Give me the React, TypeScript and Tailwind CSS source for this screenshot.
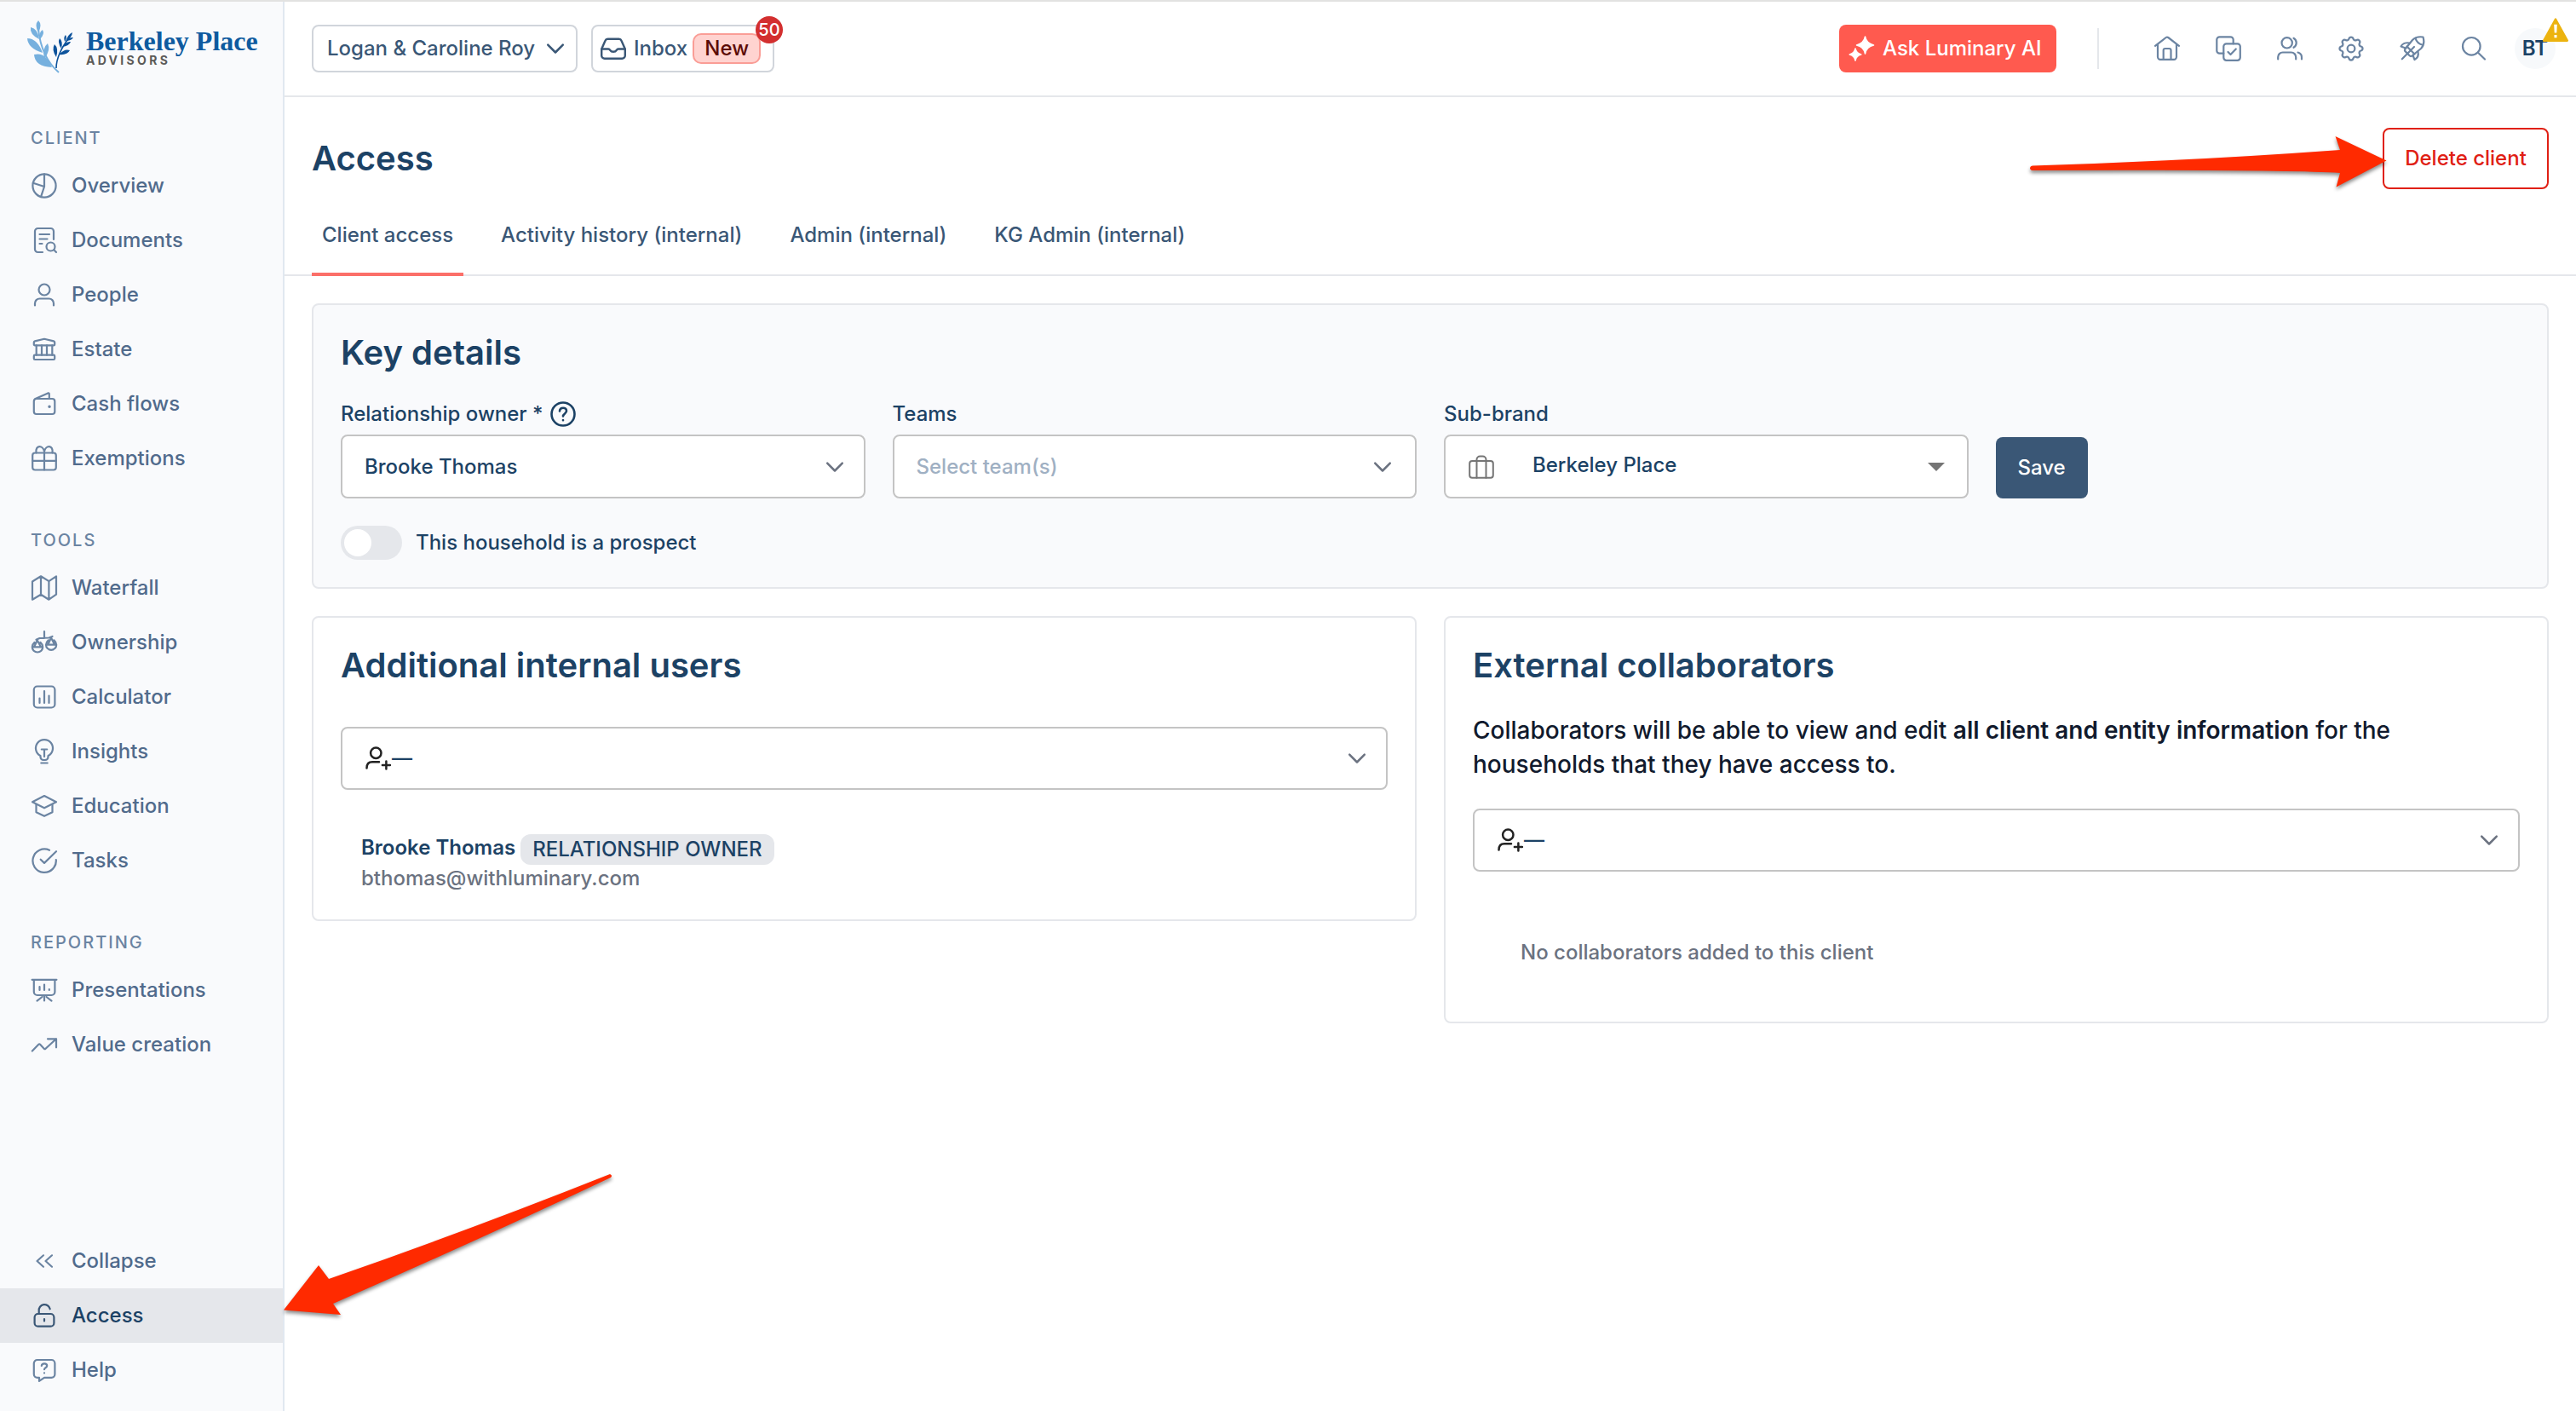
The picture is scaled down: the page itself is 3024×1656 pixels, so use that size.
import type { ReactNode } from 'react';

type IconProps = { children: ReactNode; className?: string; stroke?: number };

function Icon({ children, className = '', stroke = 2.2 }: IconProps) {
  return (
    <svg
      viewBox="0 0 32 32"
      className={`w-8 h-8 shrink-0 ${className}`}
      fill="none"
      stroke="currentColor"
      strokeWidth={stroke}
      strokeLinecap="round"
      strokeLinejoin="round"
    >
      {children}
    </svg>
  );
}

const icons = {
  overview: (
    <>
      <circle cx="16" cy="16" r="13.6" />
      <path d="M16 2.4V17l-4 12.2M2.8 12.8 16 17" />
    </>
  ),
  documents: (
    <>
      <path d="M14 30H8.5A3.5 3.5 0 0 1 5 26.5v-21A3.5 3.5 0 0 1 8.5 2h15A3.5 3.5 0 0 1 27 5.5V15" />
      <path d="M10.5 9H22M10.5 14.5h9M10.5 20h3" />
      <circle cx="23.5" cy="23.5" r="5" />
      <path d="M27.3 27.3 30 30" />
    </>
  ),
  people: (
    <>
      <circle cx="16" cy="10" r="6.5" />
      <path d="M5 28.5V26a5.5 5.5 0 0 1 5.5-5.5h11A5.5 5.5 0 0 1 27 26v2.5" />
    </>
  ),
  estate: (
    <>
      <path d="M3.8 7.8c0-.7.5-1.200 1.200-1.400L16 3.800l11 2.600c.7.2 1.200.7 1.200 1.400v2.400c0 .7-.5 1.200-1.200 1.200H5c-.7 0-1.200-.5-1.200-1.200z" />
      <path d="M6.7 11.4v11.300M13 11.400v11.300M19 11.400v11.300M25.300 11.400v11.300" />
      <rect x="3.8" y="22.7" width="24.4" height="5.3" rx="1.2" />
    </>
  ),
  cash: (
    <>
      <rect x="3.8" y="10" width="24.5" height="18" rx="3" />
      <path d="M5.5 10 20.3 3.400c.8-.3 1.500.1 1.500 1V10" />
      <circle cx="22" cy="19.3" r="1" fill="currentColor" strokeWidth="1.5" />
    </>
  ),
  gift: (
    <>
      <rect x="2.2" y="9.5" width="27.6" height="20" rx="3" />
      <path d="M16 9.5v20M2.200 18.800h27.600M6.500 9.500C5 0 14.500 0 16 8 17.500 0 27 0 25.500 9.500" />
    </>
  ),
  waterfall: (
    <path d="M2 8.500 12 2.300l9.400 5.800L30 2.400v21.300l-8.600 6L12 23.700l-10 6zM12 2.300v21.400M21.400 8.100v21.600" />
  ),
  ownership: (
    <>
      <path d="M16 3v8M6.500 12.800l4-1.800 11-.5 4-1.500" />
      <path d="M7.800 13.500 4 21.300h8zM1.800 21.300h12.400a6.200 6.200 0 0 1-12.400 0c0-2.300 1.200-4 2.800-5.400M14.200 21.300c0-2.300-1.200-4-2.800-5.400" />
      <path d="m24 10.500-3.800 8.200h8zM18 18.700h12.200a6.100 6.100 0 0 1-12.200 0c0-2.300 1.200-4 2.800-5.400M30.200 18.700c0-2.300-1.200-4-2.800-5.400" />
    </>
  ),
  calculator: (
    <>
      <rect x="3.8" y="3.5" width="24.6" height="25" rx="4" />
      <path d="M10.500 17.500V23M16 9v14M21.500 14.500V23" />
    </>
  ),
  insights: (
    <>
      <path d="M11.500 21A10 10 0 1 1 20.500 21v1.500A3.500 3.500 0 0 1 17 26h-2a3.500 3.500 0 0 1-3.500-3.500z" />
      <path d="M12.800 13.500h6.400M16 13.500V22M12.300 29.500h7.400" />
    </>
  ),
  education: (
    <>
      <path d="M2 11.300 16 4l14 7.300-14 7z" />
      <path d="M6.500 14v9.300l9.500 4.500 9.500-4.500V14" />
    </>
  ),
  tasks: (
    <>
      <path d="M22 3.800A13.700 13.700 0 1 0 29.800 15" />
      <path d="m11.700 14.700 4.300 4.200L30 5.200" />
    </>
  ),
  presentations: (
    <>
      <path d="M1.600 3.800h28.800M3.800 3.800V18a4 4 0 0 0 4 4h16.600a4 4 0 0 0 4-4V3.800" />
      <path d="M10.500 12v4M16 9.500V16M21.800 15v1M16 22v6.500M13.500 24l-6 4.600M18.500 24l6 4.600" />
    </>
  ),
  value: <path d="m1.800 23.500 7.500-7.700c.5-.5 1.300-.5 1.800 0l4.600 4.900c.5.5 1.300.5 1.800 0L30 9.300M20 9.300h10v10" />,
  collapse: <path d="M15 9.300 7.500 16l7.500 6.700M25 9.300 17.500 16l7.500 6.700" />,
  lock: (
    <>
      <rect x="4.6" y="14" width="22.8" height="14.7" rx="4" />
      <path d="M9.700 14v-3.500a6.600 6.600 0 0 1 13-2.200M16 20v2.500" />
    </>
  ),
  help: (
    <>
      <path d="M7.800 4h16.600a4 4 0 0 1 4 4v12.800a4 4 0 0 1-4 4H16l-6 4v-4H7.800a4 4 0 0 1-4-4V8a4 4 0 0 1 4-4z" />
      <path d="M12.800 11c.3-3.500 6.400-3.500 6.400 0 0 2.200-3.200 2.300-3.200 4.200M16 19.300v.1" />
    </>
  ),
};

const navGroups = [
  {
    title: 'CLIENT',
    items: [
      { name: 'Overview', icon: icons.overview },
      { name: 'Documents', icon: icons.documents },
      { name: 'People', icon: icons.people },
      { name: 'Estate', icon: icons.estate },
      { name: 'Cash flows', icon: icons.cash },
      { name: 'Exemptions', icon: icons.gift },
    ],
  },
  {
    title: 'TOOLS',
    items: [
      { name: 'Waterfall', icon: icons.waterfall },
      { name: 'Ownership', icon: icons.ownership },
      { name: 'Calculator', icon: icons.calculator },
      { name: 'Insights', icon: icons.insights },
      { name: 'Education', icon: icons.education },
      { name: 'Tasks', icon: icons.tasks },
    ],
  },
  {
    title: 'REPORTING',
    items: [
      { name: 'Presentations', icon: icons.presentations },
      { name: 'Value creation', icon: icons.value },
    ],
  },
];

const footerItems = [
  { name: 'Collapse', icon: icons.collapse },
  { name: 'Access', icon: icons.lock, active: true },
  { name: 'Help', icon: icons.help },
];

const tabs = ['Client access', 'Activity history (internal)', 'Admin (internal)', 'KG Admin (internal)'];

function NavItem({ name, icon, active }: { name: string; icon: ReactNode; active?: boolean }) {
  return (
    <a
      className={`flex h-16 items-center pl-9 ${active ? 'bg-[#e5e7eb] text-[#1c4265]' : 'text-[#516b8c]'}`}
    >
      <Icon className={active ? 'text-[#3a5776]' : 'text-[#6b84a2]'}>{icon}</Icon>
      <span className="ml-4">{name}</span>
    </a>
  );
}

// Almond shaped leaf: base x, base y, tip x, tip y, width
type LeafShape = [number, number, number, number, number];

function Leaf({ d }: { d: LeafShape }) {
  const [bx, by, tx, ty, w] = d;
  const len = Math.hypot(tx - bx, ty - by);
  const nx = (-(ty - by) / len) * w;
  const ny = ((tx - bx) / len) * w;
  const mx = bx + (tx - bx) * 0.65;
  const my = by + (ty - by) * 0.65;
  return <path d={`M${bx} ${by}Q${mx + nx} ${my + ny} ${tx} ${ty}Q${mx - nx} ${my - ny} ${bx} ${by}Z`} />;
}

const lightLeaves: LeafShape[] = [
  [13, 14, 13, 0, 5],
  [14, 22, 4, 8, 6],
  [15, 22, 18, 11, 4],
  [18, 38, 0, 21, 8],
  [20, 45, 24, 27, 5.5],
  [29, 55, 8, 40, 11],
];

const darkLeaves: LeafShape[] = [
  [34, 43, 32, 28, 4.5],
  [37, 40, 50, 35, 4.5],
  [40, 33, 38, 21, 3.5],
  [41, 31, 51, 25, 3.5],
  [44, 25, 45, 17, 2.5],
  [45, 25, 53, 14, 3],
  [46, 24, 54, 20, 2.5],
];

function Logo() {
  return (
    <div className="flex h-24 pl-8 pt-[22px]">
      <svg viewBox="0 0 56 62" className="w-[56px] h-[62px] shrink-0">
        <g fill="#76b0de">
          {lightLeaves.map((d, i) => <Leaf key={i} d={d} />)}
        </g>
        <path d="M13 10C15 30 22 48 37 61" fill="none" stroke="#76b0de" strokeWidth="2" />
        <g fill="#0c529b">
          {darkLeaves.map((d, i) => <Leaf key={i} d={d} />)}
        </g>
        <path d="M34 56C34 44 40 32 50 19" fill="none" stroke="#0c529b" strokeWidth="1.6" />
      </svg>
      <div className="ml-[13px] mt-2 flex flex-col whitespace-nowrap">
        <span className="font-['Liberation_Serif',serif] text-[32px] leading-8 font-bold text-[#0e5a9f]">
          Berkeley Place
        </span>
        <span className="text-sm leading-[14px] font-bold tracking-[3.3px] text-[#5b5a58]">ADVISORS</span>
      </div>
    </div>
  );
}

function Sidebar() {
  return (
    <aside className="flex w-[334px] shrink-0 flex-col border-r-2 border-[#e1e8f0] bg-[#f9fafc] pb-4">
      <Logo />
      {navGroups.map((group) => (
        <nav key={group.title}>
          <div className="flex h-[88px] items-end pb-2 pl-9 text-xl leading-8 tracking-[2px] text-[#6b84a2]">
            {group.title}
          </div>
          {group.items.map((item) => <NavItem key={item.name} {...item} />)}
        </nav>
      ))}
      <nav className="mt-auto">
        {footerItems.map((item) => <NavItem key={item.name} {...item} />)}
      </nav>
    </aside>
  );
}

function Chevron({ className = '' }: { className?: string }) {
  return (
    <Icon className={className} stroke={2.5}>
      <path d="m7.200 11.700 8.800 8.800 8.800-8.800" />
    </Icon>
  );
}

function Header() {
  return (
    <header className="flex h-28 items-center border-b-2 border-[#e5e7eb] pl-8 pr-6 text-[#3a5776]">
      <button className="flex h-14 w-[312px] items-center justify-between rounded-lg border-2 border-[#d1d5db] pl-4 pr-2">
        Logan &amp; Caroline Roy
        <Chevron />
      </button>
      <button className="relative ml-4 flex h-14 w-[215px] items-center rounded-lg border-2 border-[#d1d5db] pl-2">
        <Icon stroke={2.4}>
          <path d="M2.200 16.500 6.500 6.800C7 5.500 8 4.800 9.400 4.800h13.200c1.400 0 2.400.7 2.900 2l4.300 9.700v7.700a3.500 3.500 0 0 1-3.500 3.500H5.700a3.500 3.500 0 0 1-3.500-3.500z" />
          <path d="M2.500 16.500h7.700c1 0 1.500.5 2 1.300.8 1.300 2 2 3.800 2s3-.7 3.800-2c.5-.8 1-1.300 2-1.300h7.700" />
        </Icon>
        <span className="ml-2">Inbox</span>
        <span className="ml-1.5 flex h-9 w-20 items-center justify-center rounded-[10px] border-2 border-[#fa9d96] bg-[#ffd3d0] text-[#5c0b06]">
          New
        </span>
        <span className="absolute -right-3 -top-3 flex size-8 items-center justify-center rounded-full bg-[#d32f2f] text-xl text-white">
          50
        </span>
      </button>
      <button className="ml-auto flex h-14 w-[255px] items-center rounded-lg bg-[#ff5a4f] pl-[11px] text-white">
        <svg
          viewBox="0 0 32 32"
          className="h-8 w-8 shrink-0"
          fill="currentColor"
          stroke="currentColor"
          strokeWidth="1.5"
          strokeLinejoin="round"
        >
          <path d="M19.500 2c1 5.500 3.500 8.500 10 10-6.500 1.500-9 4.500-10 10-1-5.500-3.500-8.500-10-10 6.500-1.500 9-4.500 10-10z" />
          <path d="M8 16c.8 4 2.600 6 6.800 7-4.200 1-6 3-6.800 7-.8-4-2.600-6-6.800-7 4.200-1 6-3 6.800-7z" />
        </svg>
        <span className="ml-2">Ask Luminary AI</span>
      </button>
      <div className="ml-12 h-12 w-0.5 bg-[#e5e7eb]" />
      <div className="ml-16 flex items-center gap-10 text-[#6b84a2]">
        <Icon>
          <path d="M2 12.800 14.700 3c.8-.6 1.800-.6 2.600 0L30 12.800M5 10.800v15a3 3 0 0 0 3 3h16a3 3 0 0 0 3-3v-15" />
          <path d="M11.700 28.500V18a2 2 0 0 1 2-2h4.800a2 2 0 0 1 2 2v10.500" />
        </Icon>
        <Icon>
          <path d="M10.300 21.700H5.500a3.200 3.200 0 0 1-3.200-3.200v-13a3.200 3.200 0 0 1 3.200-3.200h13a3.200 3.200 0 0 1 3.200 3.200v4.800" />
          <rect x="10.3" y="10.3" width="19.5" height="19.5" rx="3.2" />
          <path d="m15.500 20 3 3 6.300-6.500" />
        </Icon>
        <Icon>
          <circle cx="12.7" cy="9.3" r="6.2" />
          <path d="M20.500 3.800a6.300 6.300 0 0 1 0 11M2.200 28.500V26a5.500 5.500 0 0 1 5.500-5.500h10A5.500 5.500 0 0 1 23.200 26v2.500M25.500 20.500a6 6 0 0 1 4.500 5.800v2.200" />
        </Icon>
        <Icon stroke={1.5}>
          <g transform="translate(-2 -2) scale(1.5)">
            <path d="M10.325 4.317c.426-1.756 2.924-1.756 3.350 0a1.724 1.724 0 0 0 2.573 1.066c1.543-.94 3.310.826 2.370 2.370a1.724 1.724 0 0 0 1.065 2.572c1.756.426 1.756 2.924 0 3.350a1.724 1.724 0 0 0-1.066 2.573c.94 1.543-.826 3.310-2.370 2.370a1.724 1.724 0 0 0-2.572 1.065c-.426 1.756-2.924 1.756-3.350 0a1.724 1.724 0 0 0-2.573-1.066c-1.543.94-3.310-.826-2.370-2.370a1.724 1.724 0 0 0-1.065-2.572c-1.756-.426-1.756-2.924 0-3.350a1.724 1.724 0 0 0 1.066-2.573c-.94-1.543.826-3.310 2.370-2.370 1 .608 2.296.07 2.572-1.065z" />
            <circle cx="12" cy="12" r="2.9" />
          </g>
        </Icon>
        <Icon>
          <path d="M28.500 2.500c-5-.8-9.500.4-12.500 3.500L7.500 16.500c-.8 1-.7 2 .2 2.900l4.900 4.900c.9.9 1.900 1 2.900.2L26 16c3-3 4-8.500 2.500-13.500z" />
          <path d="M19.500 3.800c1 3.800 4 6.800 8.500 8M18 14l-9.500 9.500M9.500 13.500 13 17M15 19l3.500 3.500M3.800 28.300 8.500 23.500" />
          <path d="M12.500 9.500C8 8.500 4 10.500 2.500 13.500L8 15.500M22.500 19.500c1 4.500-1 8-4 9.500l-2-5" />
        </Icon>
        <Icon>
          <circle cx="13.3" cy="13.3" r="10.3" />
          <path d="m21 20.800 8 7.700" />
        </Icon>
      </div>
      <div className="relative ml-8 flex size-12 items-center justify-center rounded-full bg-[#f7f9fb] font-semibold text-[#1c4265]">
        BT
        <svg viewBox="0 0 30 28" className="absolute -top-3 left-[33px] h-7 w-[30px]">
          <path d="M15 1.500 28.800 26.700H1.200z" fill="#ecb30f" stroke="#ecb30f" strokeWidth="2.4" strokeLinejoin="round" />
          <path d="M13.200 7.800h3.600l-.5 9.700h-2.600zM13.500 20h3v3.300h-3z" fill="#fff" />
        </svg>
      </div>
    </header>
  );
}

function Card({ title, className = '', children }: { title: string; className?: string; children: ReactNode }) {
  return (
    <section className={`rounded-lg border-2 border-[#e5e7eb] p-8 ${className}`}>
      <h2 className="text-[40px] leading-[48px] font-semibold">{title}</h2>
      {children}
    </section>
  );
}

function UserSelect({ className = '' }: { className?: string }) {
  return (
    <div className={`flex h-[74px] items-center rounded-lg border-2 border-[#c4c4c4] bg-white pl-[26px] pr-[18px] ${className}`}>
      <Icon className="text-[#222]" stroke={2.5}>
        <circle cx="13.3" cy="9.7" r="6.2" />
        <path d="M2.500 27.500c0-5 2-7.200 6.500-7.200h8M25.400 19.500v9M20.900 24h9" />
      </Icon>
      <span>—</span>
      <Chevron className="ml-auto text-[#6b7280]" />
    </div>
  );
}

const fieldBox = 'mt-2 flex h-[75px] items-center rounded-lg border-2 border-[#c4c4c4] bg-white pl-[26px]';

function KeyDetails() {
  return (
    <Card title="Key details" className="bg-[#f9fafc]">
      <div className="mt-8 grid grid-cols-4 items-end gap-8">
        <div>
          <label className="flex h-8 items-center">
            Relationship owner *
            <Icon className="ml-[7px]" stroke={2.6}>
              <circle cx="16" cy="16" r="13.5" />
              <path d="M12 12.500c.3-5 8-5 8-.2 0 3-4 3.200-4 6.200M16 23v.2" />
            </Icon>
          </label>
          <div className={`${fieldBox} pr-[18px]`}>
            Brooke Thomas
            <Chevron className="ml-auto text-[#6b7280]" />
          </div>
        </div>
        <div>
          <label className="flex h-8 items-center">Teams</label>
          <div className={`${fieldBox} pr-[22px] text-[#9fb0c3]`}>
            Select team(s)
            <Chevron className="ml-auto text-[#6b7280]" />
          </div>
        </div>
        <div>
          <label className="flex h-8 items-center">Sub-brand</label>
          <div className={`${fieldBox} pr-[18px]`}>
            <Icon className="text-[#757575]" stroke={2}>
              <rect x="2.2" y="9" width="27.6" height="19.7" rx="3" />
              <path d="M10.500 28.700V7.500a4 4 0 0 1 4-4h3a4 4 0 0 1 4 4v21.200" />
            </Icon>
            <span className="mb-[3px] ml-11">Berkeley Place</span>
            <svg viewBox="0 0 20 10" className="ml-auto mr-2 h-2.5 w-5 fill-[#757575]">
              <path d="M0 0h20L10 10z" />
            </svg>
          </div>
        </div>
        <button className="flex h-[72px] w-[108px] items-center justify-center rounded-lg bg-[#3a5776] text-white">
          Save
        </button>
      </div>
      <div className="mt-8 flex h-10 items-center">
        <span className="flex h-10 w-[72px] items-center rounded-full bg-[#e5e7eb] pl-1">
          <span className="size-8 rounded-full bg-white" />
        </span>
        <span className="ml-4">This household is a prospect</span>
      </div>
    </Card>
  );
}

function Arrows() {
  return (
    <svg
      viewBox="0 0 3024 1656"
      className="pointer-events-none absolute left-0 -top-0.5 h-[1656px] w-[3024px] fill-[#ff2a00] drop-shadow-[0_3px_2px_rgba(0,0,0,0.45)]"
    >
      <path d="M2386 194.500Q2570 189 2747 176L2741.500 160 2801.500 188.500 2742.500 219.500 2747 203Q2680 199 2386 200Q2383 199.500 2383 197Q2383.500 194.500 2386 194.500Z" />
      <path d="M716 1378Q719.500 1379.500 717 1382Q560 1456 391 1530L400 1543 333 1537.500 374 1485 386 1501Q550 1444 716 1378Z" />
    </svg>
  );
}

export default function App() {
  return (
    <div className="relative flex h-[1656px] w-full overflow-hidden border-t-2 border-[#e2e2e1] bg-white font-['Inter',sans-serif] text-2xl leading-8 font-medium text-[#1c4265]">
      <Sidebar />
      <div className="min-w-0 flex-1">
        <Header />
        <div className="flex items-center justify-between px-8 pt-9">
          <h1 className="text-[40px] leading-[48px] font-semibold">Access</h1>
          <button className="flex h-[72px] w-[195px] items-center justify-center rounded-lg border-2 border-[#e02014] text-[#e02014]">
            Delete client
          </button>
        </div>
        <div className="flex h-[102px] gap-8 border-b-2 border-[#e5e7eb] pl-8 text-[#3a5776]">
          {tabs.map((tab, i) => (
            <a
              key={tab}
              className={`h-[102px] border-b-4 px-3 pt-[38px] ${i === 0 ? 'border-[#fb6f69]' : 'border-transparent'}`}
            >
              {tab}
            </a>
          ))}
        </div>
        <main className="p-8">
          <KeyDetails />
          <div className="mt-8 grid grid-cols-2 items-start gap-8">
            <Card title="Additional internal users">
              <UserSelect className="mt-12" />
              <div className="mt-[52px] pl-6">
                <div className="flex h-9 items-center">
                  <span className="mb-1 font-semibold">Brooke Thomas</span>
                  <span className="ml-1.5 flex h-9 items-center rounded-xl bg-[#e5e7eb] px-[14px]">RELATIONSHIP OWNER</span>
                </div>
                <div className="text-[#6b7280]">bthomas@withluminary.com</div>
              </div>
            </Card>
            <Card title="External collaborators">
              <p className="mt-8 w-[1130px] text-[28px] leading-10 text-[#111a2d]">
                Collaborators will be able to view and edit{' '}
                <strong className="font-semibold">all client and entity information</strong> for the households that they
                have access to.
              </p>
              <UserSelect className="mt-8" />
              <div className="mt-[79px] pb-[33px] pl-14 text-[#6b7280]">No collaborators added to this client</div>
            </Card>
          </div>
        </main>
      </div>
      <Arrows />
    </div>
  );
}
